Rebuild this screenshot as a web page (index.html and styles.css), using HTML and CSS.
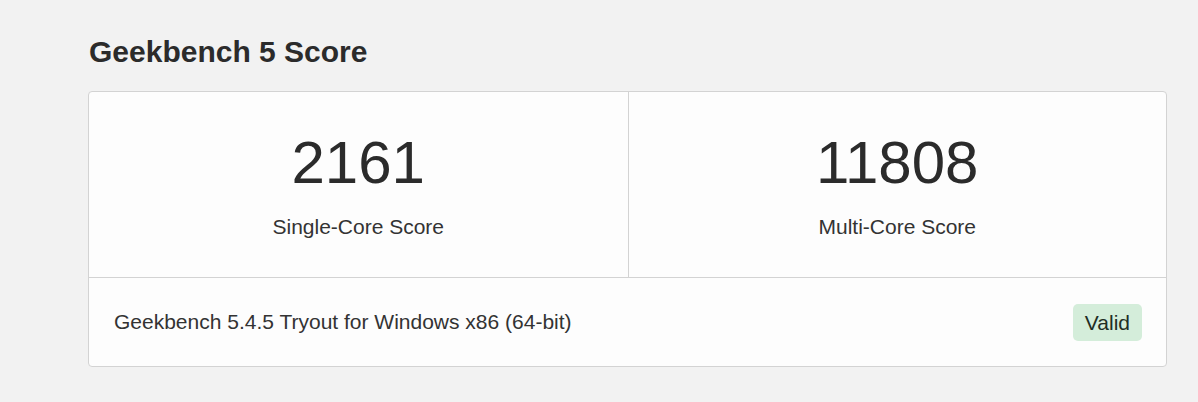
FILE: index.html
```
<!DOCTYPE html>
<html lang="en">
<head>
    <meta charset="UTF-8">
    <title>Geekbench 5 Score</title>
    <link rel="stylesheet" href="styles.css">
</head>
<body>
    <div class="page">
        <h2 class="section-title">Geekbench 5 Score</h2>
        <div class="score-card">
            <div class="score-row">
                <div class="score-cell">
                    <div class="score">2161</div>
                    <div class="score-label">Single-Core Score</div>
                </div>
                <div class="score-cell">
                    <div class="score">11808</div>
                    <div class="score-label">Multi-Core Score</div>
                </div>
            </div>
            <div class="score-footer">
                <span class="version">Geekbench 5.4.5 Tryout for Windows x86 (64-bit)</span>
                <span class="badge-valid">Valid</span>
            </div>
        </div>
    </div>
</body>
</html>
```
FILE: styles.css
```
body { font-family: "Liberation Sans", Arial, sans-serif; background: #f2f2f2; margin: 0; color: #333; }
.page { padding: 35px 31px 0 88px; }
.section-title { font-size: 30px; line-height: 34px; font-weight: bold; margin: 0 0 22px 1px; color: #2b2b2b; }
.score-card { background: #fdfdfd; border: 1px solid #d3d3d3; border-radius: 4px; }
.score-row { display: grid; grid-template-columns: 1fr 1fr; border-bottom: 1px solid #d3d3d3; }
.score-cell { text-align: center; height: 185px; padding-top: 36px; box-sizing: border-box; }
.score-cell + .score-cell { border-left: 1px solid #d3d3d3; }
.score { font-size: 60px; line-height: 70px; color: #2b2b2b; }
.score-label { font-size: 21px; margin-top: 17px; color: #333; }
.score-footer { display: flex; align-items: center; justify-content: space-between; height: 88px; padding: 0 24px 0 25px; }
.version { font-size: 21px; }
.badge-valid { background: #d4edda; color: #1f2e24; font-size: 21px; line-height: 25px; padding: 6px 12px; border-radius: 5px; }
```
